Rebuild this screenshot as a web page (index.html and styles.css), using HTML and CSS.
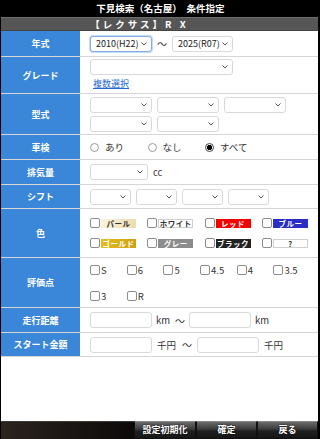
FILE: index.html
```html
<!DOCTYPE html>
<html lang="ja">
<head>
<meta charset="utf-8">
<title>下見検索（名古屋） 条件指定</title>
<link rel="stylesheet" href="styles.css">
</head>
<body>
<div class="page">
  <div class="title">下見検索（名古屋）　条件指定</div>
  <div class="car">【レクサス】R X</div>
  <div class="form">
    <div class="row r-year">
      <div class="lab">年式</div>
      <div class="val">
        <div class="sel w62 focus"><span>2010(H22)</span><svg class="chev" viewBox="0 0 6 4"><path d="M0.5 0.5 L3 3 L5.5 0.5"/></svg></div>
        <span class="tilde">〜</span>
        <div class="sel w61"><span>2025(R07)</span><svg class="chev" viewBox="0 0 6 4"><path d="M0.5 0.5 L3 3 L5.5 0.5"/></svg></div>
      </div>
    </div>
    <div class="row r-grade">
      <div class="lab">グレード</div>
      <div class="val col">
        <div class="sel w143"><span></span><svg class="chev" viewBox="0 0 6 4"><path d="M0.5 0.5 L3 3 L5.5 0.5"/></svg></div>
        <a class="link" href="#">複数選択</a>
      </div>
    </div>
    <div class="row r-type">
      <div class="lab">型式</div>
      <div class="val">
        <div class="grid3">
          <div class="sel w62"><span></span><svg class="chev" viewBox="0 0 6 4"><path d="M0.5 0.5 L3 3 L5.5 0.5"/></svg></div>
          <div class="sel w62"><span></span><svg class="chev" viewBox="0 0 6 4"><path d="M0.5 0.5 L3 3 L5.5 0.5"/></svg></div>
          <div class="sel w62"><span></span><svg class="chev" viewBox="0 0 6 4"><path d="M0.5 0.5 L3 3 L5.5 0.5"/></svg></div>
          <div class="sel w62"><span></span><svg class="chev" viewBox="0 0 6 4"><path d="M0.5 0.5 L3 3 L5.5 0.5"/></svg></div>
          <div class="sel w62"><span></span><svg class="chev" viewBox="0 0 6 4"><path d="M0.5 0.5 L3 3 L5.5 0.5"/></svg></div>
        </div>
      </div>
    </div>
    <div class="row r-25">
      <div class="lab">車検</div>
      <div class="val">
        <label class="radio-item"><span class="radio"></span>あり</label>
        <label class="radio-item"><span class="radio"></span>なし</label>
        <label class="radio-item"><span class="radio on"></span>すべて</label>
      </div>
    </div>
    <div class="row r-25">
      <div class="lab">排気量</div>
      <div class="val">
        <div class="sel w58"><span></span><svg class="chev" viewBox="0 0 6 4"><path d="M0.5 0.5 L3 3 L5.5 0.5"/></svg></div>
        <span class="unit">cc</span>
      </div>
    </div>
    <div class="row r-24">
      <div class="lab">シフト</div>
      <div class="val gap5">
        <div class="sel w41"><span></span><svg class="chev" viewBox="0 0 6 4"><path d="M0.5 0.5 L3 3 L5.5 0.5"/></svg></div>
        <div class="sel w41"><span></span><svg class="chev" viewBox="0 0 6 4"><path d="M0.5 0.5 L3 3 L5.5 0.5"/></svg></div>
        <div class="sel w41"><span></span><svg class="chev" viewBox="0 0 6 4"><path d="M0.5 0.5 L3 3 L5.5 0.5"/></svg></div>
        <div class="sel w41"><span></span><svg class="chev" viewBox="0 0 6 4"><path d="M0.5 0.5 L3 3 L5.5 0.5"/></svg></div>
      </div>
    </div>
    <div class="row r-color">
      <div class="lab">色</div>
      <div class="val">
        <div class="colors">
          <label class="citem"><span class="cb"></span><span class="sw pearl">パール</span></label>
          <label class="citem"><span class="cb"></span><span class="sw white">ホワイト</span></label>
          <label class="citem"><span class="cb"></span><span class="sw red">レッド</span></label>
          <label class="citem"><span class="cb"></span><span class="sw blue">ブルー</span></label>
          <label class="citem"><span class="cb"></span><span class="sw gold">ゴールド</span></label>
          <label class="citem"><span class="cb"></span><span class="sw gray">グレー</span></label>
          <label class="citem"><span class="cb"></span><span class="sw black">ブラック</span></label>
          <label class="citem"><span class="cb"></span><span class="sw other">?</span></label>
        </div>
      </div>
    </div>
    <div class="row r-score">
      <div class="lab">評価点</div>
      <div class="val">
        <div class="scores">
          <label class="sitem"><span class="cb"></span>S</label>
          <label class="sitem"><span class="cb"></span>6</label>
          <label class="sitem"><span class="cb"></span>5</label>
          <label class="sitem"><span class="cb"></span>4.5</label>
          <label class="sitem"><span class="cb"></span>4</label>
          <label class="sitem"><span class="cb"></span>3.5</label>
          <label class="sitem"><span class="cb"></span>3</label>
          <label class="sitem"><span class="cb"></span>R</label>
        </div>
      </div>
    </div>
    <div class="row r-25">
      <div class="lab">走行距離</div>
      <div class="val">
        <div class="inp"></div>
        <span class="unit u-km">km</span>
        <span class="tilde t-km">〜</span>
        <div class="inp"></div>
        <span class="unit u-km">km</span>
      </div>
    </div>
    <div class="row r-24">
      <div class="lab">スタート金額</div>
      <div class="val">
        <div class="inp"></div>
        <span class="unit u-yen">千円</span>
        <span class="tilde t-yen">〜</span>
        <div class="inp"></div>
        <span class="unit u-yen">千円</span>
      </div>
    </div>
  </div>
  <div class="filler"></div>
  <div class="footer">
    <div class="f-left"></div>
    <div class="fbtn b1">設定初期化</div>
    <div class="fbtn b2">確定</div>
    <div class="fbtn b3">戻る</div>
  </div>
</div>
</body>
</html>
```

FILE: styles.css
```css
* { box-sizing: border-box; }
html, body {
  margin: 0;
  padding: 0;
  width: 320px;
  height: 439px;
  overflow: hidden;
  background: #000;
}
body {
  font-family: "Noto Sans CJK JP", "Noto Sans", sans-serif;
  color: #333;
}
.page {
  width: 320px;
  height: 439px;
  display: flex;
  flex-direction: column;
  border-left: 1px solid #000;
  border-right: 2px solid #000;
  background: #fff;
}
.title {
  height: 17px;
  background: #000;
  color: #fff;
  font-size: 9.5px;
  font-weight: bold;
  line-height: 17px;
  text-align: center;
  padding-left: 2px;
}
.car {
  height: 14px;
  background: #565656;
  border-top: 1px solid #6e6e6e;
  border-bottom: 1px solid #444;
  color: #fff;
  font-size: 9.5px;
  font-weight: bold;
  line-height: 12px;
  text-align: center;
  letter-spacing: 3px;
  padding-right: 40px;
}
.form { display: flex; flex-direction: column; }
.row {
  display: grid;
  grid-template-columns: 79px 1fr;
  border-bottom: 1px solid #d6d6d6;
}
.r-year { height: 26px; }
.r-grade { height: 37px; }
.r-type { height: 41px; }
.r-25 { height: 25px; }
.r-24 { height: 24px; }
.r-color { height: 49px; }
.r-score { height: 50px; }
.lab {
  background: #3a86d9;
  color: #fff;
  font-size: 9px;
  font-weight: bold;
  display: flex;
  align-items: center;
  justify-content: center;
}
.val {
  display: flex;
  align-items: center;
  padding-left: 10px;
  font-size: 9px;
}
.val.col {
  flex-direction: column;
  align-items: flex-start;
  justify-content: flex-start;
  padding-top: 2px;
}
.gap5 { gap: 5px; }
.sel {
  height: 16px;
  border: 1px solid #d9d9d9;
  border-radius: 3px;
  background: #fff;
  display: flex;
  align-items: center;
  justify-content: space-between;
  padding: 0 4px 0 5px;
  font-size: 9px;
  color: #222;
}
.sel.focus {
  border-color: #86aee6;
  box-shadow: 0 0 0 1px #c7dbf5;
}
.chev {
  width: 6px;
  height: 4px;
  fill: none;
  stroke: #555;
  stroke-width: 1;
  flex: none;
}
.w62 { width: 62px; }
.w61 { width: 61px; }
.w58 { width: 58px; }
.w41 { width: 41px; }
.w143 { width: 143px; }
.tilde {
  font-size: 10px;
  color: #333;
  width: 10px;
  margin: 0 5px;
  text-align: center;
}
.link {
  margin-top: 2px;
  margin-left: 3px;
  color: #2468d6;
  font-size: 9px;
  text-decoration: underline;
}
.grid3 {
  display: grid;
  grid-template-columns: 62px 62px 62px;
  column-gap: 5px;
  row-gap: 3px;
}
.radio-item {
  width: 57.5px;
  display: flex;
  align-items: center;
  font-size: 9.5px;
  color: #333;
}
.radio {
  width: 9px;
  height: 9px;
  border-radius: 50%;
  border: 1px solid #9a9a9a;
  background: #fff;
  margin-right: 6px;
  flex: none;
}
.radio.on {
  border-color: #444;
  background: radial-gradient(circle, #000 0 2.4px, #fff 2.9px);
}
.unit {
  font-size: 9.5px;
  color: #333;
  margin-left: 5px;
}
.u-km { margin-left: 4px; }
.t-km { margin: 0 4px 0 5px; }
.u-yen { margin-left: 5px; }
.t-yen { margin: 0 5px 0 6px; }
.colors {
  display: grid;
  grid-template-columns: repeat(4, 57.3px);
  row-gap: 10px;
}
.citem {
  display: flex;
  align-items: center;
}
.cb {
  width: 10px;
  height: 10px;
  border: 1px solid #8c8c8c;
  border-radius: 2px;
  background: #fff;
  flex: none;
}
.sw {
  width: 35px;
  height: 9px;
  margin-left: 1px;
  font-size: 7.5px;
  font-weight: bold;
  line-height: 9px;
  text-align: center;
  letter-spacing: 0.5px;
  color: #fff;
}
.pearl { background: linear-gradient(90deg, #faf2dc, #ecdcae); color: #333; }
.white { background: #fff; border: 1px solid #cfcfcf; color: #333; line-height: 7px; }
.red { background: #f20000; }
.blue { background: #2a2ec4; }
.gold { background: linear-gradient(90deg, #e6bd1c, #cfa014); color: #fff; }
.gray { background: #8c8c8c; }
.black { background: #222; }
.other { background: #fff; border: 1px solid #cfcfcf; color: #333; line-height: 7px; }
.scores {
  display: grid;
  grid-template-columns: repeat(6, 36.7px);
  row-gap: 12px;
}
.sitem {
  display: flex;
  align-items: center;
  font-size: 9.5px;
  color: #333;
  gap: 1px;
}
.inp {
  width: 62px;
  height: 16px;
  border: 1px solid #d9d9d9;
  border-radius: 3px;
  background: #fff;
}
.filler { flex: 1; background: #fff; }
.footer {
  height: 18px;
  display: flex;
  background: #000;
}
.f-left {
  flex: 1;
  background: linear-gradient(90deg, #2b231e, #0c0a09);
  border-top: 1px solid #3a3a3a;
}
.fbtn {
  height: 18px;
  border: 1px solid #111;
  border-top-color: #888;
  background: linear-gradient(#6a6a6a, #3a3a3a 45%, #202020 55%, #161616);
  color: #fff;
  font-size: 9px;
  font-weight: bold;
  line-height: 16px;
  text-align: center;
  text-shadow: 0 0 2px #000;
}
.b1 { width: 62px; }
.b2 { width: 61px; }
.b3 { width: 61px; }
```
